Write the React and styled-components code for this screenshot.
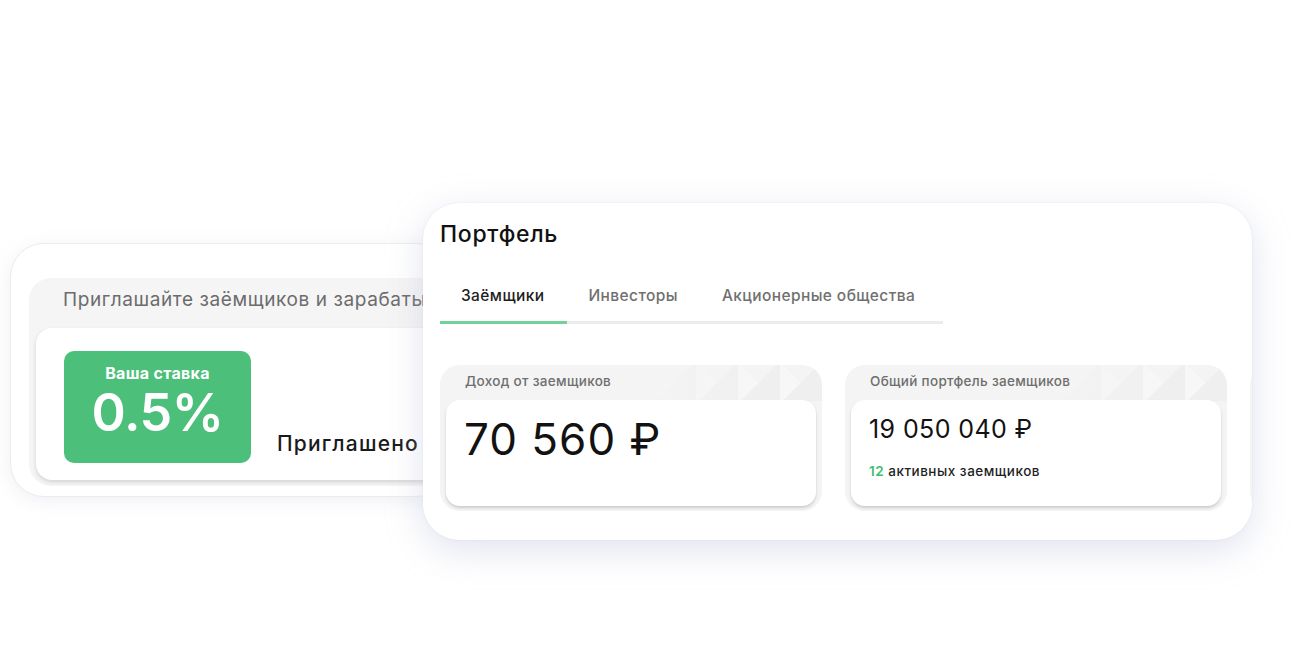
import React from 'react';
import styled, { createGlobalStyle } from 'styled-components';

const GlobalStyle = createGlobalStyle`
    html, body {
        margin: 0;
        padding: 0;
        background: #ffffff;
        font-family: Inter, "Noto Sans", "Liberation Sans", sans-serif;
        color: #141414;
    }
`

const stats = [
    { label: 'Доход от заемщиков', value: '70 560 ₽', big: true },
    { label: 'Общий портфель заемщиков', value: '19 050 040 ₽', count: 12, note: 'активных заемщиков' },
    { label: '', value: '' },
];

const tabs = ['Заёмщики', 'Инвесторы', 'Акционерные общества'];

function App() {
    return (
        <Scene>
            <GlobalStyle />
            <InviteWindow>
                <InvitePanel>
                    <InviteTitle>Приглашайте заёмщиков и зарабатывайте</InviteTitle>
                    <InviteBody>
                        <RateBadge>
                            <RateLabel>Ваша ставка</RateLabel>
                            <RateValue>0.5%</RateValue>
                        </RateBadge>
                        <Invited>Приглашено</Invited>
                    </InviteBody>
                </InvitePanel>
            </InviteWindow>
            <PortfolioWindow>
                <Title>Портфель</Title>
                <Tabs>
                    {tabs.map((t, i) => (
                        <Tab key={t} active={i === 0}>{t}</Tab>
                    ))}
                </Tabs>
                <StatRow>
                    {stats.map((s, i) => (
                        <StatCard key={i}>
                            <StatLabel>{s.label}</StatLabel>
                            <StatBody>
                                <StatValue big={s.big}>{s.value}</StatValue>
                                {s.count && (
                                    <StatNote><b>{s.count}</b> {s.note}</StatNote>
                                )}
                            </StatBody>
                        </StatCard>
                    ))}
                </StatRow>
            </PortfolioWindow>
        </Scene>
    );
}

export default App;

const Scene = styled.div`
    position: relative;
    width: 1300px;
    height: 668px;
    overflow: hidden;
    background: #ffffff;
`
/* windows on a free canvas; the back one slides under the front one */
const InviteWindow = styled.div`
    position: absolute;
    left: 10px;
    top: 243px;
    width: 440px;
    height: 254px;
    box-sizing: border-box;
    padding: 34px 0 10px 18px;
    background: #ffffff;
    border: 1px solid #ececec;
    border-radius: 34px;
    overflow: hidden;
    box-shadow: 0 4px 18px rgba(190, 194, 214, 0.25);
`
const InvitePanel = styled.div`
    height: 100%;
    box-sizing: border-box;
    background: #f5f5f5;
    border-radius: 22px 0 0 22px;
    padding: 0 0 6px 7px;
    display: flex;
    flex-direction: column;
`
const InviteTitle = styled.div`
    font-size: 19px;
    letter-spacing: 0.6px;
    line-height: 24px;
    color: #6c6c6c;
    padding: 10px 0 16px 27px;
    white-space: nowrap;
    overflow: hidden;
`
const InviteBody = styled.div`
    flex: 1;
    display: flex;
    align-items: flex-start;
    gap: 26px;
    padding: 23px 0 0 28px;
    background: #ffffff;
    border-radius: 16px 0 0 16px;
    box-shadow: 0 2px 4px rgba(0, 0, 0, 0.14);
`
const RateBadge = styled.div`
    flex: 0 0 187px;
    height: 112px;
    box-sizing: border-box;
    background: #4cbf7b;
    border-radius: 10px;
    color: #ffffff;
    display: flex;
    flex-direction: column;
    align-items: center;
    padding-top: 12px;
`
const RateLabel = styled.div`
    font-size: 16px;
    font-weight: 700;
    letter-spacing: 0.3px;
    line-height: 20px;
`
const RateValue = styled.div`
    font-size: 52px;
    font-weight: 600;
    line-height: 60px;
    letter-spacing: -0.5px;
`
const Invited = styled.div`
    margin-top: 80px;
    font-size: 21px;
    font-weight: 500;
    letter-spacing: 1.2px;
    line-height: 26px;
    color: #1a1a1a;
    white-space: nowrap;
`
const PortfolioWindow = styled.div`
    position: absolute;
    left: 423px;
    top: 203px;
    width: 829px;
    height: 337px;
    box-sizing: border-box;
    padding: 16px 0 0 17px;
    background: #ffffff;
    border-radius: 36px;
    overflow: hidden;
    box-shadow: 0 10px 36px rgba(176, 182, 214, 0.38), 0 0 2px rgba(176, 182, 214, 0.3);
`
const Title = styled.div`
    font-size: 23px;
    font-weight: 500;
    letter-spacing: 0.7px;
    line-height: 30px;
    color: #111111;
`
const Tabs = styled.div`
    display: flex;
    width: 503px;
    margin-top: 20px;
    border-bottom: 3px solid #ececec;
`
const Tab = styled.div`
    padding: 17px 23px 15px 21px;
    margin-bottom: -3px;
    font-size: 15.5px;
    font-weight: 500;
    letter-spacing: 0.4px;
    line-height: 20px;
    color: ${props => props.active ? '#1d1d1d' : '#707070'};
    border-bottom: 3px solid ${props => props.active ? '#72d39a' : 'transparent'};
    white-space: nowrap;
`
const StatRow = styled.div`
    display: flex;
    gap: 23px;
    margin-top: 41px;
`
const StatCard = styled.div`
    flex: 0 0 382px;
    height: 146px;
    box-sizing: border-box;
    padding: 0 6px 5px 6px;
    display: flex;
    flex-direction: column;
    border-radius: 20px;
    background-color: #f4f4f4;
    background-image:
        linear-gradient(to right, #f4f4f4 55%, rgba(244, 244, 244, 0) 85%),
        linear-gradient(135deg, transparent 50%, #efefef 50%),
        linear-gradient(45deg, #f7f7f7 50%, transparent 50%);
    background-size: 100% 36px, 42px 36px, 42px 36px;
    background-repeat: no-repeat, repeat-x, repeat-x;
    background-position: 0 0, right 0 top 0, right 0 top 0;
`
const StatLabel = styled.div`
    height: 35px;
    line-height: 33px;
    padding-left: 19px;
    font-size: 13.5px;
    font-weight: 500;
    letter-spacing: 0.3px;
    color: #6e6e6e;
    white-space: nowrap;
`
const StatBody = styled.div`
    flex: 1;
    background: #ffffff;
    border-radius: 14px;
    box-shadow: 0 2px 3px rgba(0, 0, 0, 0.16);
    padding: 0 18px;
    display: flex;
    flex-direction: column;
`
const StatValue = styled.div`
    font-size: ${props => props.big ? '44px' : '25px'};
    line-height: ${props => props.big ? '50px' : '30px'};
    margin-top: 14px;
    letter-spacing: ${props => props.big ? '1px' : '0.4px'};
    font-weight: 400;
    color: #121212;
    white-space: nowrap;
`
const StatNote = styled.div`
    margin-top: 19px;
    font-size: 13.5px;
    font-weight: 500;
    letter-spacing: 0.5px;
    color: #1f1f1f;
    b {
        font-weight: 600;
        color: #3cbf6c;
    }
`
